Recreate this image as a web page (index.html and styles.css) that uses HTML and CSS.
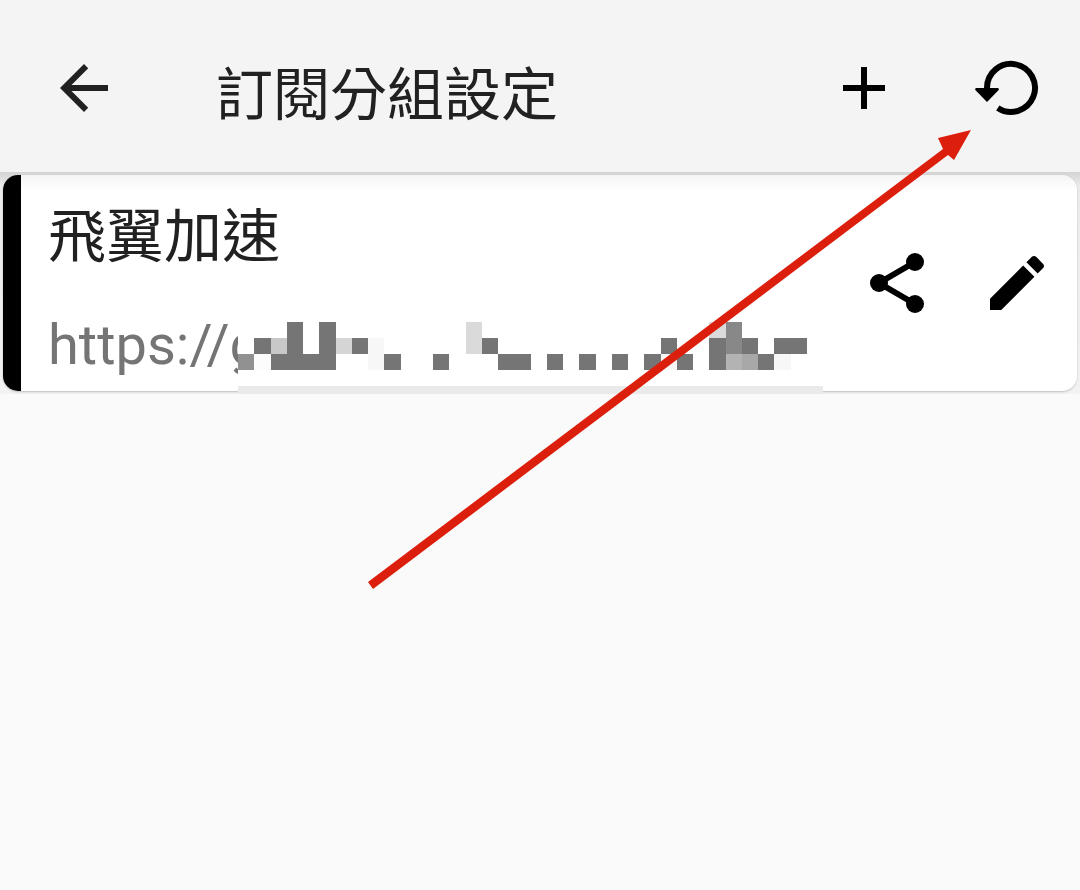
FILE: index.html
```html
<!DOCTYPE html>
<html lang="zh-Hant">
<head>
<meta charset="utf-8">
<meta name="viewport" content="width=device-width, initial-scale=1">
<title>訂閱分組設定</title>
<link rel="stylesheet" href="styles.css">
</head>
<body>
<header class="toolbar">
  <button class="icon-button back" type="button" aria-label="返回">
    <svg class="icon" viewBox="0 0 24 24"><path d="M20 11H7.83l5.59-5.59L12 4l-8 8 8 8 1.41-1.41L7.83 13H20v-2z"/></svg>
  </button>
  <h1 class="toolbar-title">訂閱分組設定</h1>
  <button class="icon-button" type="button" aria-label="新增">
    <svg class="icon" viewBox="0 0 24 24"><path d="M19 13h-6v6h-2v-6H5v-2h6V5h2v6h6v2z"/></svg>
  </button>
  <button class="icon-button" type="button" aria-label="更新">
    <svg class="icon" viewBox="0 0 24 24">
      <path d="M5 12.500V12A8 8 0 1 1 8.600 18.650" fill="none" stroke="currentColor" stroke-width="2"/>
      <path d="M1.400 12H8.600Q9.200 12.200 8.900 12.700L5 16.700 1.100 12.700Q.8 12.200 1.400 12z"/>
    </svg>
  </button>
</header>
<main class="list">
  <article class="card">
    <span class="stripe"></span>
    <div class="details">
      <h2 class="name">飛翼加速</h2>
      <p class="url">https://g
        <svg class="mosaic" viewBox="0 0 585 72" aria-hidden="true">
          <path fill="#fff" d="M0 0h585v64H0z"/>
          <path fill="#eaeaea" d="M0 64h585v8H0z"/>
          <g transform="scale(16.25 16)" shape-rendering="crispEdges">
            <path fill="#757575" d="M3 0h1v2h1V0h1v3H2V2h1zM1 1h1v1H1zM7 1h1v1H7zM9 2h1v1H9zM12 2h1v1h-1zM15 1h1v1h-1zM16 2h2v1h-2zM19 2h1v1h-1zM21 2h1v1h-1zM23 2h1v1h-1zM25 2h1v1h-1zM26 1h1v1h-1zM27 2h1v1h-1zM29 1h1v2h-1zM31 1h1v1h-1zM32 2h1v1h-1zM33 1h2v1h-2z"/>
            <path fill="#919191" d="M0 2h1v1H0z"/>
            <path fill="#c8c8c8" d="M2 1h1v1H2z"/>
            <path fill="#d5d5d5" d="M6 1h1v1H6z"/>
            <path fill="#dadada" d="M14 0h1v2h-1zM29 0h1v1h-1z"/>
            <path fill="#888" d="M30 0h1v2h-1z"/>
            <path fill="#b3b3b3" d="M30 2h1v1h-1z"/>
            <path fill="#a8a8a8" d="M31 2h1v1h-1z"/>
            <path fill="#f7f7f7" d="M8 1h1v2H8zM26 2h1v1h-1zM33 2h1v1h-1z"/>
            <path fill="#fcfcfc" d="M1 2h1v1H1z"/>
          </g>
        </svg>
      </p>
    </div>
    <button class="icon-button small" type="button" aria-label="分享">
      <svg class="icon" viewBox="0 0 24 24"><path d="M18 5 6 12l12 7" fill="none" stroke="currentColor" stroke-width="2"/><circle cx="18" cy="5" r="3"/><circle cx="6" cy="12" r="3"/><circle cx="18" cy="19" r="3"/></svg>
    </button>
    <button class="icon-button small" type="button" aria-label="編輯">
      <svg class="icon" viewBox="0 0 24 24"><path d="M3 17.250V21h3.750L17.810 9.940l-3.750-3.750L3 17.250zM20.710 7.040c.39-.39.39-1.020 0-1.410l-2.340-2.340c-.39-.39-1.020-.39-1.410 0l-1.830 1.830 3.750 3.750 1.830-1.830z"/></svg>
    </button>
  </article>
</main>
<svg class="pointer" viewBox="0 0 1080 600" aria-hidden="true">
  <path fill="#dc1f0c" d="M971 130 938 138 943 149 368 582 373 589 948 155 954 160z"/>
</svg>
</body>
</html>
```
FILE: styles.css
```css
body {
  margin: 0;
  min-height: 100vh;
  position: relative;
  background: #fafafa;
  color: #212121;
  font-family: Roboto, "Noto Sans CJK TC", sans-serif;
}

.toolbar {
  display: flex;
  align-items: center;
  box-sizing: border-box;
  min-height: 172px;
  padding-top: 4px;
  background: #f4f4f4;
}

.toolbar-title {
  flex: 1;
  margin: 0 0 0 48px;
  padding-top: 16px;
  font-size: 57px;
  line-height: 84px;
  font-weight: 400;
}

.icon-button {
  flex: none;
  display: grid;
  place-items: center;
  width: 144px;
  height: 144px;
  padding: 0;
  border: 0;
  background: none;
  color: #000;
}

.icon-button.back {
  width: 168px;
  color: #212121;
}

.icon-button.small {
  width: 120px;
}

.icon {
  width: 72px;
  height: 72px;
  fill: currentColor;
}

.list {
  padding: 3px;
  background: linear-gradient(#d4d4d4 0, #d8d8d8 3px, #ececec 14px, #f2f2f2 100%);
}

.card {
  display: flex;
  align-items: center;
  min-height: 216px;
  border-radius: 15px;
  background: linear-gradient(#f4f4f4 0, #fff 15px);
  box-shadow: 0 1px 2px rgba(0, 0, 0, 0.22);
}

.stripe {
  align-self: stretch;
  width: 18px;
  border-radius: 15px 0 0 15px;
  background: #000;
}

.details {
  flex: 1;
  align-self: flex-start;
  min-width: 0;
  padding: 20px 0 0 27px;
}

.name {
  margin: 0;
  font-size: 58px;
  line-height: 84px;
  font-weight: 400;
}

.url {
  position: relative;
  margin: 30px 0 0;
  font-size: 56px;
  line-height: 72px;
  color: #757575;
}

.mosaic {
  position: absolute;
  left: 190px;
  top: 13px;
  width: 585px;
  height: 72px;
}

.pointer {
  position: absolute;
  left: 0;
  top: 0;
  width: 1080px;
  height: 600px;
  pointer-events: none;
}
```
